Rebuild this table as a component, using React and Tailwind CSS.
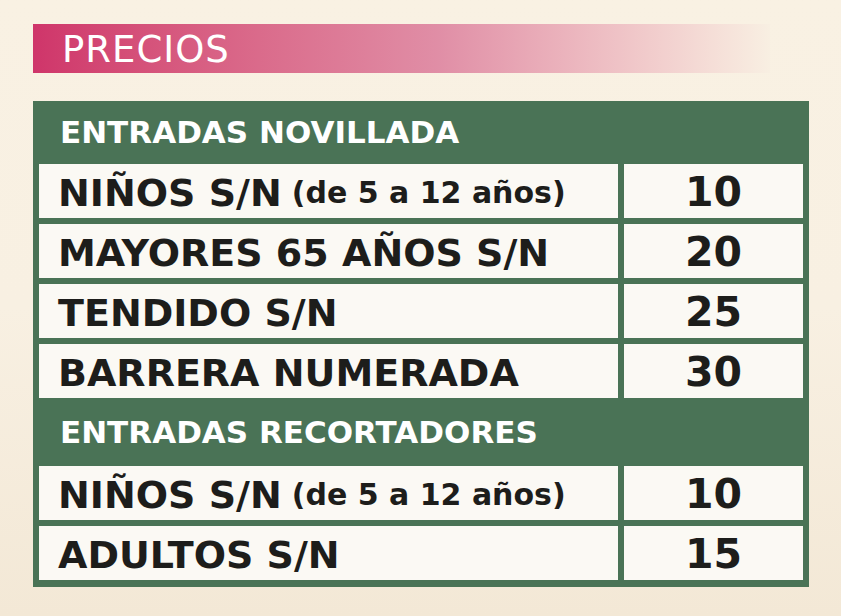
const novillada = [
  { label: "NIÑOS S/N", note: "(de 5 a 12 años)", price: "10" },
  { label: "MAYORES 65 AÑOS S/N", price: "20" },
  { label: "TENDIDO S/N", price: "25" },
  { label: "BARRERA NUMERADA", price: "30" },
];

const recortadores = [
  { label: "NIÑOS S/N", note: "(de 5 a 12 años)", price: "10" },
  { label: "ADULTOS S/N", price: "15" },
];

function SectionHeader({ children, className }) {
  return (
    <div className={`flex items-center pl-[21px] text-[31px] font-bold leading-none text-white ${className}`}>
      {children}
    </div>
  );
}

function PriceRow({ row }) {
  return (
    <div className="grid h-[54px] grid-cols-[579px_179px] gap-x-[6px]">
      <div className="flex items-center bg-[#fbf9f4] pl-[19px] pt-[3px] leading-none text-[#1d1d1b]">
        <span className="text-[38px] font-bold">{row.label}</span>
        {row.note && <span className="ml-[10px] text-[30px] font-bold">{row.note}</span>}
      </div>
      <div className="flex items-center justify-center bg-[#fbf9f4] pt-[3px] text-[41px] font-bold leading-none text-[#1d1d1b]">
        {row.price}
      </div>
    </div>
  );
}

export default function App() {
  return (
    <div
      className="h-[616px] w-[841px] overflow-hidden bg-gradient-to-b from-[#f9f1e3] via-[#f8f0e2] to-[#f3e8d6] pt-[24px] pl-[33px]"
      style={{ fontFamily: '"DejaVu Sans", "Noto Sans", sans-serif' }}
    >
      <div className="flex h-[49px] w-[737px] items-center bg-gradient-to-r from-[#cf356a] via-[#e08ea6] via-55% to-[#f8efe2] pl-[29px] pt-[2px]">
        <span className="text-[37px] leading-none tracking-[1px] text-white">PRECIOS</span>
      </div>

      <div className="mt-[28px] w-[776px] bg-[#4a7356] px-[6px] pb-[7px]">
        <SectionHeader className="h-[63px]">ENTRADAS NOVILLADA</SectionHeader>
        <div className="flex flex-col gap-[6px]">
          {novillada.map((row, i) => (
            <PriceRow key={i} row={row} />
          ))}
        </div>
        <SectionHeader className="h-[68px]">ENTRADAS RECORTADORES</SectionHeader>
        <div className="flex flex-col gap-[6px]">
          {recortadores.map((row, i) => (
            <PriceRow key={i} row={row} />
          ))}
        </div>
      </div>
    </div>
  );
}
